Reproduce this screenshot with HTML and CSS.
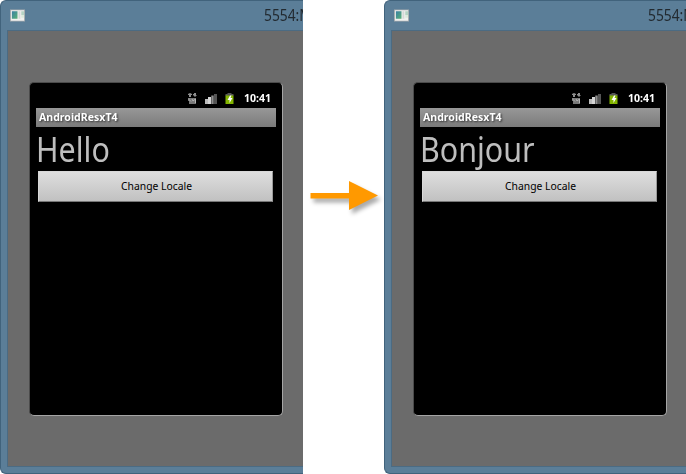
FILE: index.html
```html
<!DOCTYPE html>
<html lang="en">
<head>
<meta charset="utf-8">
<title>AndroidResxT4</title>
<link rel="stylesheet" href="styles.css">
</head>
<body>
<svg class="defs" width="0" height="0">
  <symbol id="app" viewBox="0 0 16 13">
    <path fill="#a3a9ad" d="M0 0h16v13H0z"/><path fill="#f1f1ef" d="M1 1h14v11H1z"/>
    <path fill="url(#screen)" d="M2 2h6v8H2z"/><path fill="#d5d8d7" d="M9 2h2v8H9z"/><path fill="#b5d3c4" d="M12 2h3v4h-3z"/><path fill="#dceadd" d="M12 6h3v3h-3z"/>
  </symbol>
  <linearGradient id="screen" x2="1" y2="1"><stop stop-color="#397fa4"/><stop offset="1" stop-color="#58b276"/></linearGradient>
  <symbol id="status" viewBox="0 0 48 14">
    <path fill="#8d8d8d" d="M1 2l2-1 2 1v1H4v2H2V3H1zM6 2h1V1h2v2h1L8 5 6 3z"/>
    <path fill="#777" d="M1 6h8v6H2V9H1z"/><path fill="none" stroke="#b5b5b5" d="M2 6.500v1l2 2M5 7l1 2 2.500-2v4"/>
    <path fill="#bbb" d="M18 7h3v5h-3z"/><path fill="#d5d5d5" d="M21 5h3v7h-3z"/><path fill="#909090" d="M24.300 3.500h2.400V12h-2.400z"/><path fill="#555" d="M27 2h3v10h-3z"/>
    <path fill="#555" d="M40.500 1h4v1h2v2h-8V2h2z"/><path fill="#83b500" d="M38.500 3.500h8V12h-8z"/><path fill="#fff" d="M43 3.500L40.500 8h2v3l3-5h-2l1-2.500z"/>
  </symbol>
</svg>
<main class="comparison">
  <section class="window">
    <header class="titlebar"><svg class="app-icon"><use href="#app"/></svg><span class="window-title">5554:MyAVD</span></header>
    <div class="client">
      <div class="phone">
        <div class="statusbar"><svg class="status-icons"><use href="#status"/></svg><span class="clock">10:41</span></div>
        <div class="activity"><span class="activity-title">AndroidResxT4</span></div>
        <div class="greeting"><span class="greeting-text">Hello</span></div>
        <button class="locale"><span class="locale-text">Change Locale</span></button>
      </div>
    </div>
  </section>
  <div class="transition">
    <svg class="arrow" viewBox="0 0 81 44"><path d="M7.500 18H46V6l29 14.500L46 35V23.500H7.500z"/></svg>
  </div>
  <section class="window">
    <header class="titlebar"><svg class="app-icon"><use href="#app"/></svg><span class="window-title">5554:MyAVD</span></header>
    <div class="client">
      <div class="phone">
        <div class="statusbar"><svg class="status-icons"><use href="#status"/></svg><span class="clock">10:41</span></div>
        <div class="activity"><span class="activity-title">AndroidResxT4</span></div>
        <div class="greeting"><span class="greeting-text">Bonjour</span></div>
        <button class="locale"><span class="locale-text">Change Locale</span></button>
      </div>
    </div>
  </section>
</main>
</body>
</html>
```
FILE: styles.css
```css
* { box-sizing: border-box; }
body { margin: 0; background: #fff; overflow: hidden; font-family: "Noto Sans", "Open Sans", sans-serif; }
.defs { display: block; }
.comparison { display: grid; grid-template-columns: 303px 81px 302px; height: 474px; }
.window { overflow: hidden; height: 474px; padding-left: 6px; border: 1px solid #41637c; border-right: 0; border-radius: 6px 0 0 6px; background: #5b7e98; }
.titlebar { display: flex; height: 29px; padding-left: 3px; }
.app-icon { width: 15px; height: 13px; flex: none; margin-top: 8px; }
.window-title { flex: none; margin-left: 239px; font: 15.5px/20px "Noto Sans", sans-serif; color: #222a30; padding-top: 4px; white-space: nowrap; transform: scaleX(.89); transform-origin: left; }
.client { height: 437px; padding: 51px 0 0 21px; border: 1px solid #4b6b83; border-right: 0; background: #6b6b6b; }
.phone { width: 254px; height: 334px; padding: 0 6px; border: 1px solid #4b4b4b; border-right-color: #a5a5a5; border-bottom-color: #a5a5a5; border-radius: 5px; background: #000; }
.statusbar { display: flex; justify-content: flex-end; height: 25px; padding: 8px 5px 0 0; }
.status-icons { width: 48px; height: 14px; margin: 1px 9px 0 0; }
.clock { width: 27px; color: #fff; font-size: 11px; line-height: 13px; font-weight: 700; transform: scaleX(.96); transform-origin: left; white-space: nowrap; }
.activity { height: 19px; padding-left: 3px; background: linear-gradient(#979797, #7b7b7b); }
.activity-title { display: inline-block; color: #fff; font-size: 11px; line-height: 17px; font-weight: 700; text-shadow: 1px 1px 2px #333; transform: scaleX(.96); transform-origin: left; vertical-align: top; }
.greeting { height: 44px; }
.greeting-text { display: inline-block; color: #bebebe; font-size: 34px; line-height: 44px; transform: scaleX(.895); transform-origin: left; vertical-align: top; }
.locale { display: block; width: 235px; height: 31px; margin-left: 2px; padding: 0; border: 1px solid #d8d8d8; border-right-color: #999; border-bottom-color: #777; background: linear-gradient(#dedede, #c1c1c1); color: #000; font: 11px/26px "Noto Sans", sans-serif; }
.locale-text { display: block; padding-bottom: 2px; transform: translateX(1px) scaleX(.94); }
.transition { padding-top: 175px; }
.arrow { display: block; width: 81px; height: 44px; fill: #f90; filter: drop-shadow(3px 4px 2px #0005); }
```
